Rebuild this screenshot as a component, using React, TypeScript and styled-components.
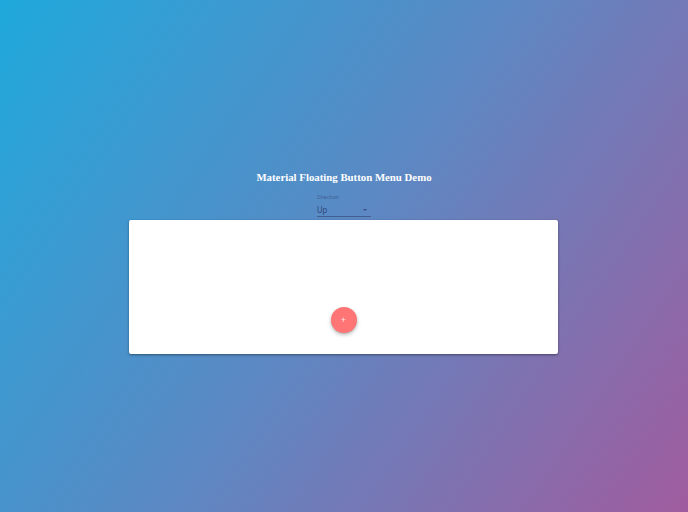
import styled, { createGlobalStyle } from "styled-components";
import { FC } from "react";

const GlobalStyle = createGlobalStyle`
  html, body {
    margin: 0;
    padding: 0;
  }
  body {
    font-family: Roboto, "Liberation Sans", sans-serif;
  }
`;

const Page = styled.div`
  min-height: 100vh;
  box-sizing: border-box;
  background: linear-gradient(124deg, #1fa9dc 0%, #5d88c3 50%, #a05c9e 100%);
  display: flex;
  flex-direction: column;
  align-items: center;
  padding-top: 170px;
`;

const Title = styled.h1`
  margin: 0;
  font-family: "Liberation Serif", "Times New Roman", serif;
  font-size: 10.8px;
  font-weight: 700;
  color: #ffffff;
  line-height: 15px;
`;

const FormControl = styled.div`
  margin-top: 9px;
  width: 54px;
  display: flex;
  flex-direction: column;
`;

const Label = styled.span`
  font-size: 5.5px;
  line-height: 7px;
  color: rgba(40, 50, 90, 0.5);
`;

const SelectBox = styled.div`
  display: flex;
  align-items: center;
  justify-content: space-between;
  margin-top: 2px;
  height: 13px;
  border-bottom: 1px solid rgba(40, 40, 80, 0.45);
  font-size: 8.5px;
  color: rgba(30, 35, 80, 0.65);
`;

const Arrow = styled.span`
  width: 0;
  height: 0;
  margin-right: 4px;
  border-left: 2.5px solid transparent;
  border-right: 2.5px solid transparent;
  border-top: 2.5px solid rgba(30, 35, 80, 0.55);
`;

const Card = styled.div`
  margin-top: 3px;
  margin-right: 1px;
  width: 429px;
  height: 134px;
  box-sizing: border-box;
  background: #ffffff;
  border-radius: 2px;
  box-shadow: 0 1px 3px rgba(0, 0, 0, 0.25), 0 1px 2px rgba(0, 0, 0, 0.2);
  display: flex;
  align-items: flex-end;
  justify-content: center;
  padding-bottom: 21px;
`;

const Fab = styled.button`
  width: 26px;
  height: 26px;
  border: none;
  padding: 0;
  border-radius: 50%;
  background: #ff7474;
  color: rgba(255, 255, 255, 0.85);
  font-family: "Liberation Sans", sans-serif;
  font-size: 9px;
  line-height: 26px;
  text-align: center;
  box-shadow: 0 2px 4px rgba(0, 0, 0, 0.22), 0 1px 2px rgba(0, 0, 0, 0.15);
  cursor: pointer;
`;

const App: FC = () => {
  return (
    <>
      <GlobalStyle />
      <Page>
        <Title>Material Floating Button Menu Demo</Title>
        <FormControl>
          <Label>Direction</Label>
          <SelectBox>
            <span>Up</span>
            <Arrow />
          </SelectBox>
        </FormControl>
        <Card>
          <Fab>+</Fab>
        </Card>
      </Page>
    </>
  );
};

export default App;
